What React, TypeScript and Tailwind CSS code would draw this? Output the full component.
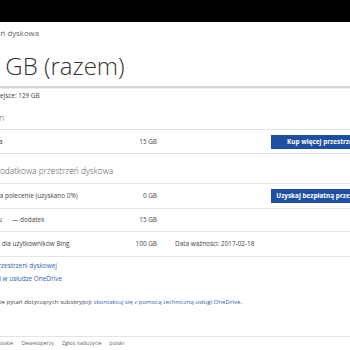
import React from "react";

const Row = ({
  label,
  labelOffset,
  value,
  extra,
  button,
  h,
}: {
  label: React.ReactNode;
  labelOffset: number;
  value: string;
  extra?: string;
  button?: string;
  h: string;
}) => (
  <div className={`flex items-center ${h} border-t border-[#e4e4e4] text-[6.4px] text-[#444]`}>
    <div className="w-[157px] shrink-0 flex items-center">
      <span className="whitespace-nowrap" style={{ marginLeft: labelOffset }}>
        {label}
      </span>
      <span className="ml-auto whitespace-nowrap">{value}</span>
    </div>
    <div className="w-[114px] shrink-0 pl-[18px] whitespace-nowrap">{extra}</div>
    {button ? (
      <div className="h-[14px] w-[104px] shrink-0 bg-[#1f4fa0] text-white font-bold flex items-center justify-center whitespace-nowrap">
        {button}
      </div>
    ) : null}
  </div>
);

export default function App() {
  return (
    <div
      className="w-[350px] h-[350px] overflow-hidden bg-white flex flex-col"
      style={{ fontFamily: '"Open Sans", "Noto Sans", sans-serif' }}
    >
      <div className="h-[22px] bg-black shrink-0" />
      <div className="h-[24px] flex items-center shrink-0 text-[7.8px] text-[#666]">
        <span className="whitespace-nowrap ml-[-33px]">Przestrzeń dyskowa</span>
      </div>
      <div className="h-[40px] flex items-center shrink-0 text-[24px] font-light text-[#333]">
        <span className="whitespace-nowrap ml-[-42px]">130 GB (razem)</span>
      </div>
      <div className="h-[2px] bg-[#d4d4d4] shrink-0" />
      <div className="h-[1px] bg-[#eeeeee] shrink-0" />
      <div className="h-[14px] flex items-center shrink-0 text-[6.4px] text-[#444]">
        <span className="whitespace-nowrap ml-[-38px]">Dostępne miejsce: 129 GB</span>
      </div>
      <div className="h-[26px] flex items-center pt-[4px] shrink-0 text-[9px] font-light text-[#555]">
        <span className="whitespace-nowrap ml-[-34px]">Twój plan</span>
      </div>
      <Row
        h="h-[24px]"
        label="Bezpłatna"
        labelOffset={-27}
        value="15 GB"
        button="Kup więcej przestrzeni"
      />
      <div className="h-[30px] flex items-end pb-[5px] border-t border-[#e4e4e4] shrink-0 text-[8.4px] font-light text-[#555]">
        <span className="whitespace-nowrap ml-[-6px]">Dodatkowa przestrzeń dyskowa</span>
      </div>
      <Row
        h="h-[25px]"
        label="Premia za polecenie (uzyskano 0%)"
        labelOffset={-26}
        value="0 GB"
        button="Uzyskaj bezpłatną przestrzeń"
      />
      <Row
        h="h-[23px]"
        label={
          <>
            Rolka z aparatu<span className="ml-[10px]">— dodatek</span>
          </>
        }
        labelOffset={-44}
        value="15 GB"
      />
      <Row
        h="h-[25px]"
        label="Premia dla użytkowników Bing"
        labelOffset={-21}
        value="100 GB"
        extra="Data ważności: 2017-02-18"
      />
      <div className="border-t border-[#e4e4e4] pt-[2px] flex flex-col text-[6.4px] leading-[13px] text-[#2f63b0] shrink-0">
        <span className="whitespace-nowrap ml-[-46px]">Zobacz plany przestrzeni dyskowej</span>
        <span className="whitespace-nowrap ml-[-37px]">Zrealizuj kod w usłudze OneDrive</span>
      </div>
      <div className="mt-[10px] h-[13px] flex items-center text-[6.1px] text-[#444] shrink-0">
        <span className="whitespace-nowrap ml-[-16px]">
          W razie pytań dotyczących subskrypcji{" "}
          <span className="text-[#2f63b0]">skontaktuj się z pomocą techniczną usługi OneDrive</span>.
        </span>
      </div>
      <div className="mt-auto border-t border-[#e4e4e4] h-[14px] flex items-center gap-[8px] text-[5.4px] text-[#666] shrink-0">
        <span className="whitespace-nowrap ml-[-128px]">© 2016 Microsoft</span>
        <span className="whitespace-nowrap">Warunki</span>
        <span className="whitespace-nowrap">Prywatność i pliki cookie</span>
        <span className="whitespace-nowrap">Deweloperzy</span>
        <span className="whitespace-nowrap">Zgłoś nadużycie</span>
        <span className="whitespace-nowrap">polski</span>
      </div>
    </div>
  );
}
